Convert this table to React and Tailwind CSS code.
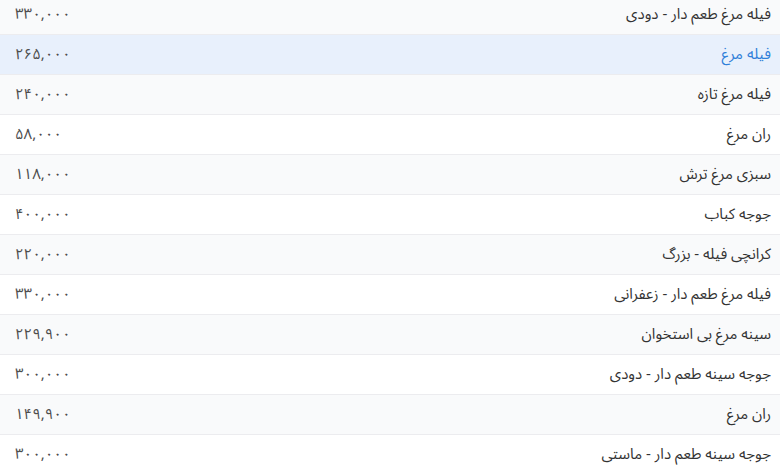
const rows = [
  { name: "فیله مرغ طعم دار - دودی", price: "۳۳۰,۰۰۰" },
  { name: "فیله مرغ", price: "۲۶۵,۰۰۰", active: true },
  { name: "فیله مرغ تازه", price: "۲۴۰,۰۰۰" },
  { name: "ران مرغ", price: "۵۸,۰۰۰" },
  { name: "سبزی مرغ ترش", price: "۱۱۸,۰۰۰" },
  { name: "جوجه کباب", price: "۴۰۰,۰۰۰" },
  { name: "کرانچی فیله - بزرگ", price: "۲۲۰,۰۰۰" },
  { name: "فیله مرغ طعم دار - زعفرانی", price: "۳۳۰,۰۰۰" },
  { name: "سینه مرغ بی استخوان", price: "۲۲۹,۹۰۰" },
  { name: "جوجه سینه طعم دار - دودی", price: "۳۰۰,۰۰۰" },
  { name: "ران مرغ", price: "۱۴۹,۹۰۰" },
  { name: "جوجه سینه طعم دار - ماستی", price: "۳۰۰,۰۰۰" },
];

export default function App() {
  return (
    <div
      dir="rtl"
      className="h-[470px] w-[780px] overflow-hidden bg-white text-[15px]"
      style={{ fontFamily: '"Noto Sans Arabic", "DejaVu Sans", sans-serif' }}
    >
      {rows.map((row, i) => (
        <div
          key={i}
          className={`flex items-center justify-between border-b border-[#ececef] pl-[15px] pr-[9px] ${
            i === 0 ? "h-[35px] pb-[6px]" : "h-[40px]"
          } ${row.active ? "bg-[#e8f0fc]" : i % 2 === 0 ? "bg-[#f9fafb]" : "bg-white"}`}
        >
          <span className={row.active ? "text-[#2f7fd9]" : "text-[#333]"}>{row.name}</span>
          <span className="tracking-[1.5px] text-[#4d4d4d]">{row.price}</span>
        </div>
      ))}
    </div>
  );
}
